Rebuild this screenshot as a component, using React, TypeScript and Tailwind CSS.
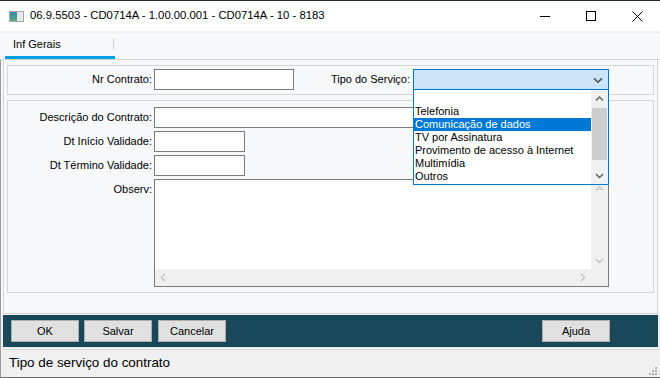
import React from "react";

const Chev = ({ dir, color = "#606060", size = 9 }: { dir: "up" | "down" | "left" | "right"; color?: string; size?: number }) => {
  const paths: Record<string, string> = {
    down: "M1 3 L4.5 6.5 L8 3",
    up: "M1 6.5 L4.5 3 L8 6.5",
    left: "M6 1 L2.5 4.5 L6 8",
    right: "M3 1 L6.5 4.5 L3 8",
  };
  return (
    <svg width={size} height={size} viewBox="0 0 9 9">
      <path d={paths[dir]} fill="none" stroke={color} strokeWidth="1.4" />
    </svg>
  );
};

const items = ["", "Telefonia", "Comunicação de dados", "TV por Assinatura", "Provimento de acesso à Internet", "Multimídia", "Outros"];

export default function App() {
  return (
    <div
      className="relative w-[660px] h-[378px] flex flex-col bg-white text-[#000] overflow-hidden"
      style={{ fontFamily: '"Liberation Sans", Arial, sans-serif' }}
    >
      {/* Title bar */}
      <div className="h-[31px] border-t border-[#1f2b31] bg-white flex items-center shrink-0">
        <div className="ml-[9px] w-[15px] h-[11px] border border-[#a9a9a9] bg-[#dcdcdc] flex">
          <div className="w-[7px] h-full bg-gradient-to-b from-[#3a8bb0] to-[#56a878]" />
          <div className="flex-1 bg-[#eaeaea]" />
        </div>
        <div className="ml-[6px] text-[11.3px] text-[#000] leading-none">
          06.9.5503 - CD0714A - 1.00.00.001 - CD0714A - 10 - 8183
        </div>
        <div className="ml-auto flex items-center h-full">
          <div className="w-[46px] h-full flex items-center justify-center">
            <div className="w-[10px] h-px bg-black" />
          </div>
          <div className="w-[46px] h-full flex items-center justify-center">
            <div className="w-[10px] h-[10px] border border-black" />
          </div>
          <div className="w-[46px] h-full flex items-center justify-center">
            <svg width="11" height="11" viewBox="0 0 11 11">
              <path d="M0.5 0.5 L10.5 10.5 M10.5 0.5 L0.5 10.5" stroke="#000" strokeWidth="1" />
            </svg>
          </div>
        </div>
      </div>
      <div className="h-[2px] bg-[#f0f0f0] shrink-0" />

      {/* Tab strip */}
      <div className="h-[26px] bg-[#f7f8fa] border-b border-[#d4d4d4] flex shrink-0 box-content">
        <div className="ml-[5px] w-[110px] h-full flex flex-col relative">
          <div className="flex-1 flex items-center pl-[8px] text-[11px]">Inf Gerais</div>
          <div className="h-[3px] bg-[#00a1e4]" />
          <div className="absolute right-px top-[5px] h-[12px] w-px bg-[#d0d0d0]" />
        </div>
      </div>

      {/* Content */}
      <div className="h-[254px] bg-[#f7f8fa] border-l border-[#9a9a9a] pl-[2px] pr-[2px] shrink-0 flex">
        <div className="flex-1 border-l border-r border-b border-[#d6d6d6] px-[3px] pt-[5px] flex flex-col text-[11px]">
          {/* Group 1 */}
          <div className="h-[30px] border border-[#d6d6d6] flex items-start pt-[3px]">
            <div className="w-[144px] text-right h-[21px] leading-[21px]">Nr Contrato:</div>
            <div className="ml-[2px] w-[140px] h-[21px] bg-white border border-[#7a7a7a]" />
            <div className="w-[116px] text-right h-[21px] leading-[21px]">Tipo do Serviço:</div>
            <div className="ml-[3px] relative z-10">
              <div className="w-[196px] h-[21px] bg-[#cce4f7] border border-[#0078d7] flex items-center justify-end pr-[5px]">
                <Chev dir="down" color="#505050" size={10} />
              </div>
              <div className="absolute left-0 top-[21px] w-[196px] h-[95px] bg-white border border-t-0 border-[#0078d7] flex">
                <div className="flex-1 flex flex-col pt-[2px]">
                  {items.map((t, i) => (
                    <div
                      key={i}
                      className={
                        "h-[13px] leading-[13px] pl-[1px] whitespace-nowrap " +
                        (i === 2 ? "bg-[#0078d7] text-white" : "text-black")
                      }
                    >
                      {t}
                    </div>
                  ))}
                </div>
                <div className="w-[17px] bg-[#f0f0f0] flex flex-col items-center">
                  <div className="h-[17px] flex items-center justify-center">
                    <Chev dir="up" color="#606060" />
                  </div>
                  <div className="w-[15px] h-[52px] bg-[#cdcdcd] mt-[1px]" />
                  <div className="flex-1" />
                  <div className="h-[17px] flex items-center justify-center">
                    <Chev dir="down" color="#606060" />
                  </div>
                </div>
              </div>
            </div>
          </div>

          {/* Group 2 */}
          <div className="mt-[5px] h-[193px] border border-[#d6d6d6] pt-[6px] flex flex-col gap-[3px]">
            <div className="flex items-center">
              <div className="w-[144px] text-right">Descrição do Contrato:</div>
              <div className="ml-[2px] w-[455px] h-[21px] bg-white border border-[#7a7a7a]" />
            </div>
            <div className="flex items-center">
              <div className="w-[144px] text-right">Dt Início Validade:</div>
              <div className="ml-[2px] w-[91px] h-[21px] bg-white border border-[#7a7a7a]" />
            </div>
            <div className="flex items-center">
              <div className="w-[144px] text-right">Dt Término Validade:</div>
              <div className="ml-[2px] w-[91px] h-[21px] bg-white border border-[#7a7a7a]" />
            </div>
            <div className="flex items-start">
              <div className="w-[144px] text-right pt-[2px]">Observ:</div>
              <div className="ml-[2px] w-[455px] h-[108px] bg-white border border-[#7a7a7a] flex flex-col">
                <div className="flex-1 flex">
                  <div className="flex-1" />
                  <div className="w-[17px] bg-[#f0f0f0] flex flex-col items-center">
                    <div className="h-[17px] flex items-center justify-center">
                      <Chev dir="up" color="#c2c2c2" />
                    </div>
                    <div className="flex-1" />
                    <div className="h-[17px] flex items-center justify-center">
                      <Chev dir="down" color="#c2c2c2" />
                    </div>
                  </div>
                </div>
                <div className="h-[17px] bg-[#f0f0f0] flex items-center">
                  <div className="w-[17px] flex justify-center">
                    <Chev dir="left" color="#c2c2c2" />
                  </div>
                  <div className="flex-1" />
                  <div className="w-[17px] flex justify-center">
                    <Chev dir="right" color="#c2c2c2" />
                  </div>
                  <div className="w-[17px]" />
                </div>
              </div>
            </div>
          </div>
        </div>
      </div>

      {/* Button bar */}
      <div className="h-[35px] bg-[#f0f0f0] border-l border-[#9a9a9a] pl-[2px] pr-[2px] pt-px shrink-0 flex flex-col">
        <div className="h-[32px] bg-[#19485a] flex items-center text-[11px]">
          <button className="ml-[8px] w-[68px] h-[22px] bg-[#e1e1e1] border border-[#adadad]">OK</button>
          <button className="ml-[5px] w-[68px] h-[22px] bg-[#e1e1e1] border border-[#adadad]">Salvar</button>
          <button className="ml-[6px] w-[68px] h-[22px] bg-[#e1e1e1] border border-[#adadad]">Cancelar</button>
          <button className="ml-auto mr-[48px] w-[68px] h-[22px] bg-[#e1e1e1] border border-[#adadad]">Ajuda</button>
        </div>
      </div>

      {/* Status bar */}
      <div className="flex-1 bg-[#f0f0f0] border-l border-[#9a9a9a] border-t border-t-[#dcdcdc] border-b border-b-[#6e6e6e] flex items-center pl-[8px] relative">
        <span className="text-[13.4px]">Tipo de serviço do contrato</span>
        <svg className="absolute right-[3px] bottom-[2px]" width="8" height="8" viewBox="0 0 8 8">
          <rect x="6" y="0" width="2" height="2" fill="#b4b4b4" />
          <rect x="3" y="3" width="2" height="2" fill="#b4b4b4" />
          <rect x="6" y="3" width="2" height="2" fill="#b4b4b4" />
          <rect x="0" y="6" width="2" height="2" fill="#b4b4b4" />
          <rect x="3" y="6" width="2" height="2" fill="#b4b4b4" />
          <rect x="6" y="6" width="2" height="2" fill="#b4b4b4" />
        </svg>
      </div>
    </div>
  );
}
